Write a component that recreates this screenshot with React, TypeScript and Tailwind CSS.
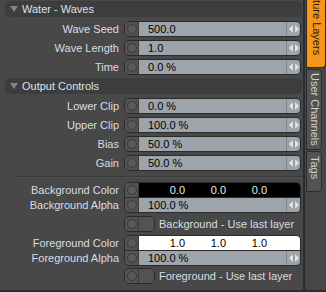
import React from 'react'

function Knob() {
    return (
        <div className='w-[14px] h-full shrink-0 bg-[#525252] border-r border-[#3a3a3a] flex items-center justify-center'>
            <div className='w-[10px] h-[10px] rounded-full border border-[#3a3a3a] bg-[#5a5a5a]' />
        </div>
    )
}

function Arrows() {
    return (
        <div className='w-[14px] h-full shrink-0 bg-[#9da4ab] border-l border-[#7d848b] flex items-center justify-center'>
            <svg width="12" height="10" viewBox="0 0 12 10">
                <polygon points="5,1 5,9 1,5" fill="#e2e5e8" />
                <rect x="5.5" y="1" width="1" height="8" fill="#8c9399" />
                <polygon points="7,1 7,9 11,5" fill="#e2e5e8" />
            </svg>
        </div>
    )
}

function Header({ title }: { title: string }) {
    return (
        <div className='ml-[5px] mr-[1px] h-[16px] rounded-[5px] bg-[#3d3d3d] flex items-center gap-[4px] pl-[5px] text-[#dde2e6]'>
            <svg width="8" height="6" viewBox="0 0 8 6">
                <polygon points="0,0 8,0 4,6" fill="#858585" />
            </svg>
            <span>{title}</span>
        </div>
    )
}

function Label({ text }: { text: string }) {
    return <div className='w-[119px] shrink-0 text-right text-[#d8dde2] mr-[5px]'>{text}</div>
}

function Field({ label, value }: { label: string; value: string }) {
    return (
        <div className='flex items-center h-[16px]'>
            <Label text={label} />
            <div className='w-[177px] h-[16px] flex rounded-[5px] border border-[#2a2a2a] overflow-hidden'>
                <Knob />
                <div className='flex-1 bg-[#9da4ab] text-black pl-[9px] flex items-center'>{value}</div>
                <Arrows />
            </div>
        </div>
    )
}

function ColorGroup({ name, dark }: { name: string; dark: boolean }) {
    const vals = dark ? ['0.0', '0.0', '0.0'] : ['1.0', '1.0', '1.0']
    return (
        <div className='flex flex-col'>
            <div className='flex items-center h-[16px]'>
                <Label text={name + ' Color'} />
                <div className='w-[177px] h-[16px] flex rounded-t-[5px] border border-[#2a2a2a] overflow-hidden'>
                    <Knob />
                    <div className={dark ? 'flex-1 bg-black text-[#e4ecf2] flex items-center pl-[5px]' : 'flex-1 bg-white text-black flex items-center pl-[5px]'}>
                        {vals.map((v, i) => (
                            <span key={i} className='w-[41px] text-right'>{v}</span>
                        ))}
                    </div>
                </div>
            </div>
            <div className='flex items-center h-[15px]'>
                <Label text={name + ' Alpha'} />
                <div className='w-[177px] h-[15px] flex rounded-b-[5px] border border-t-0 border-[#2a2a2a] overflow-hidden'>
                    <Knob />
                    <div className='flex-1 bg-[#9da4ab] text-black pl-[9px] flex items-center'>100.0 %</div>
                    <Arrows />
                </div>
            </div>
        </div>
    )
}

function Check({ text }: { text: string }) {
    return (
        <div className='flex items-center h-[16px] pl-[124px]'>
            <div className='w-[31px] h-[16px] flex rounded-[5px] border border-[#2a2a2a] overflow-hidden'>
                <Knob />
                <div className='flex-1 bg-[#525252]' />
            </div>
            <span className='ml-[4px] text-[#d8dde2]'>{text}</span>
        </div>
    )
}

function App() {
    return (
        <div className="w-[326px] h-[292px] bg-[#484848] flex overflow-hidden border-b-2 border-[#2c2c2c] text-[11px] leading-none font-['Liberation_Sans',Arial,sans-serif]">

            <div className='w-[303px] shrink-0 flex flex-col pt-[1px]'>
                <Header title='Water - Waves' />

                <div className='flex flex-col gap-[3px] mt-[4px]'>
                    <Field label='Wave Seed' value='500.0' />
                    <Field label='Wave Length' value='1.0' />
                    <Field label='Time' value='0.0 %' />
                </div>

                <div className='mt-[3px]'>
                    <Header title='Output Controls' />
                </div>

                <div className='flex flex-col gap-[3px] mt-[4px]'>
                    <Field label='Lower Clip' value='0.0 %' />
                    <Field label='Upper Clip' value='100.0 %' />
                    <Field label='Bias' value='50.0 %' />
                    <Field label='Gain' value='50.0 %' />
                </div>

                <div className='mt-[5px] ml-[16px] h-[2px] border-t border-[#383838] border-b border-b-[#4f4f4f]' />

                <div className='mt-[4px]'>
                    <ColorGroup name='Background' dark={true} />
                </div>
                <div className='mt-[3px]'>
                    <Check text='Background - Use last layer' />
                </div>
                <div className='mt-[3px]'>
                    <ColorGroup name='Foreground' dark={false} />
                </div>
                <div className='mt-[2px]'>
                    <Check text='Foreground - Use last layer' />
                </div>
            </div>

            <div className='w-[23px] shrink-0 border-l-2 border-[#2c2c2c] bg-[#464646] pl-[1px] flex flex-col'>
                <div className='w-[20px] h-[68px] bg-[#f5961a] border border-t-0 border-[#2c2c2c] rounded-br-[4px] flex flex-col justify-end items-center pb-[12px] overflow-hidden'>
                    <span className='[writing-mode:vertical-rl] text-[#2a1d08] whitespace-nowrap'>Texture Layers</span>
                </div>
                <div className='mt-[1px] w-[16px] h-[81px] bg-[#525252] border border-[#2c2c2c] rounded-r-[4px] flex flex-col items-center pt-[3px] overflow-hidden'>
                    <span className='[writing-mode:vertical-rl] text-[#d6d0c8] whitespace-nowrap'>User Channels</span>
                </div>
                <div className='mt-[1px] w-[16px] h-[41px] bg-[#525252] border border-[#2c2c2c] rounded-r-[4px] flex flex-col items-center pt-[4px] overflow-hidden'>
                    <span className='[writing-mode:vertical-rl] text-[#d6d0c8] whitespace-nowrap'>Tags</span>
                </div>
            </div>

        </div>
    )
}

export default App
